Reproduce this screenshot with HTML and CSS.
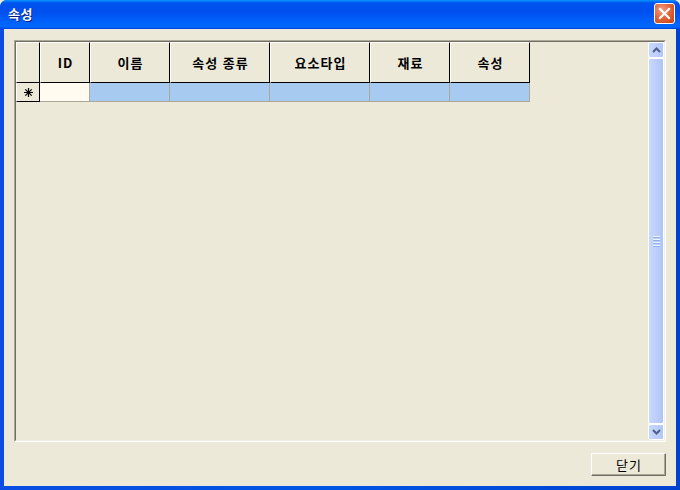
FILE: index.html
```html
<!DOCTYPE html>
<html lang="ko">
<head>
<meta charset="utf-8">
<title>속성</title>
<link rel="stylesheet" href="styles.css">
</head>
<body>
<div class="window">
  <div class="titlebar">
    <span class="title">속성</span>
    <div class="close">
      <svg width="13" height="13" viewBox="0 0 13 13"><path d="M2 2 L11 11 M11 2 L2 11" stroke="#fff" stroke-width="2.2" stroke-linecap="square"/></svg>
    </div>
  </div>
  <div class="body">
    <div class="gridbox">
      <div class="table">
        <div class="row header">
          <div class="hc rh"></div>
          <div class="hc c-id">ID</div>
          <div class="hc c80">이름</div>
          <div class="hc c100">속성 종류</div>
          <div class="hc c100">요소타입</div>
          <div class="hc c80">재료</div>
          <div class="hc c80">속성</div>
        </div>
        <div class="row data">
          <div class="rhd">
            <svg width="11" height="11" viewBox="0 0 11 11"><path d="M5.5 1 V10 M1 5.5 H10 M2.3 2.3 L8.7 8.7 M8.7 2.3 L2.3 8.7" stroke="#000" stroke-width="1.2"/></svg>
          </div>
          <div class="dc cream c-id"></div>
          <div class="dc blue c80"></div>
          <div class="dc blue c100"></div>
          <div class="dc blue c100"></div>
          <div class="dc blue c80"></div>
          <div class="dc blue c80"></div>
        </div>
      </div>
      <div class="scrollbar">
        <div class="sbtn">
          <svg width="9" height="6" viewBox="0 0 9 6"><path d="M1 5 L4.5 1.5 L8 5" fill="none" stroke="#4d6185" stroke-width="2"/></svg>
        </div>
        <div class="thumb">
          <div class="grip"><span></span><span></span><span></span><span></span></div>
        </div>
        <div class="sbtn">
          <svg width="9" height="6" viewBox="0 0 9 6"><path d="M1 1 L4.5 4.5 L8 1" fill="none" stroke="#4d6185" stroke-width="2"/></svg>
        </div>
      </div>
    </div>
    <div class="footer">
      <button class="btn">닫기</button>
    </div>
  </div>
</div>
</body>
</html>
```

FILE: styles.css
```css
html, body {
  margin: 0;
  padding: 0;
  background: #ece9d8;
}
body {
  font-family: "Noto Sans CJK KR", "DejaVu Sans", sans-serif;
}
.window {
  width: 680px;
  height: 490px;
  box-sizing: border-box;
  display: flex;
  flex-direction: column;
  background: linear-gradient(to right, #0a4de2, #0055e5 50%, #0041d0);
  padding: 0 4px 4px 4px;
  border-radius: 7px 7px 0 0;
}
.titlebar {
  height: 29px;
  margin: 0 -4px;
  padding: 0 4px 0 8px;
  display: flex;
  align-items: center;
  justify-content: space-between;
  border-radius: 7px 7px 0 0;
  background: linear-gradient(to bottom, #0997ff 0%, #0053ee 10%, #0050ee 40%, #0066ff 86%, #0066ff 92%, #005bff 95%, #003dd7 100%);
}
.title {
  color: #fff;
  font-weight: bold;
  font-size: 13px;
  text-shadow: 1px 1px 0 #0a1883;
  letter-spacing: 0.5px;
  margin-top: -2px;
}
.close {
  width: 21px;
  height: 21px;
  box-sizing: border-box;
  border: 1px solid #fff;
  border-radius: 3px;
  margin-right: 1px;
  margin-top: -3px;
  background: radial-gradient(circle at 35% 30%, #f0a085 0%, #e2643f 45%, #c8400f 100%);
  display: flex;
  align-items: center;
  justify-content: center;
}
.body {
  flex: 1;
  background: #ece9d8;
  display: flex;
  flex-direction: column;
  padding: 11px 10px 10px 10px;
}
.gridbox {
  height: 402px;
  box-sizing: border-box;
  border-top: 1px solid #aca899;
  border-left: 1px solid #aca899;
  border-right: 1px solid #fff;
  border-bottom: 1px solid #fff;
  display: flex;
  justify-content: space-between;
  position: relative;
}
.gridbox::before {
  content: "";
  position: absolute;
  inset: 0;
  border-top: 1px solid #716f64;
  border-left: 1px solid #716f64;
  border-right: 1px solid #f1efe2;
  border-bottom: 1px solid #f1efe2;
  pointer-events: none;
}
.table {
  margin: 1px 0 0 1px;
  display: flex;
  flex-direction: column;
}
.row {
  display: flex;
}
.header {
  height: 41px;
}
.hc {
  box-sizing: border-box;
  height: 41px;
  border-top: 1px solid #fff;
  border-left: 1px solid #fff;
  border-right: 1px solid #000;
  border-bottom: 1px solid #000;
  background: #ece9d8;
  display: flex;
  align-items: center;
  justify-content: center;
  font-size: 13px;
  font-weight: bold;
  letter-spacing: 1px;
  padding: 0 0 1px 1px;
  color: #000;
}
.rh { width: 24px; }
.c-id { width: 50px; }
.c80 { width: 80px; }
.c100 { width: 100px; }
.data {
  height: 19px;
}
.rhd {
  width: 24px;
  height: 19px;
  box-sizing: border-box;
  border-left: 1px solid #fff;
  border-right: 1px solid #000;
  border-bottom: 1px solid #000;
  background: #ece9d8;
  display: flex;
  align-items: center;
  justify-content: center;
}
.dc {
  height: 19px;
  box-sizing: border-box;
  border-right: 1px solid #aca899;
  border-bottom: 1px solid #aca899;
}
.cream { background: #fffbf0; }
.blue { background: #a6caf0; }
.scrollbar {
  width: 16px;
  margin: 1px 1px 1px 0;
  background: #f7f6f0;
  display: flex;
  flex-direction: column;
}
.sbtn {
  height: 16px;
  box-sizing: border-box;
  border: 1px solid #fff;
  border-radius: 2px;
  background: linear-gradient(to right, #c8d8fd, #bccffb 60%, #b1c6f7);
  display: flex;
  align-items: center;
  justify-content: center;
}
.thumb {
  flex: 1;
  box-sizing: border-box;
  border: 1px solid #fff;
  border-radius: 2px;
  background: linear-gradient(to right, #c9d8fd, #bacdfa 60%, #b0c5f6);
  display: flex;
  align-items: center;
  justify-content: center;
}
.grip {
  display: flex;
  flex-direction: column;
  gap: 1px;
}
.grip span {
  display: block;
  width: 7px;
  height: 1px;
  background: #eef4fe;
  border-bottom: 1px solid #8cb0f8;
}
.footer {
  margin-top: 11px;
  display: flex;
  justify-content: flex-end;
}
.btn {
  width: 75px;
  height: 23px;
  margin: 0;
  padding: 0 0 0 1px;
  box-sizing: border-box;
  background: #ece9d8;
  border-top: 1px solid #fff;
  border-left: 1px solid #fff;
  border-right: 1px solid #716f64;
  border-bottom: 1px solid #716f64;
  box-shadow: inset -1px -1px 0 #aca899;
  font-family: "Noto Sans CJK KR", "DejaVu Sans", sans-serif;
  font-size: 13px;
  letter-spacing: 1px;
  color: #000;
}
```
